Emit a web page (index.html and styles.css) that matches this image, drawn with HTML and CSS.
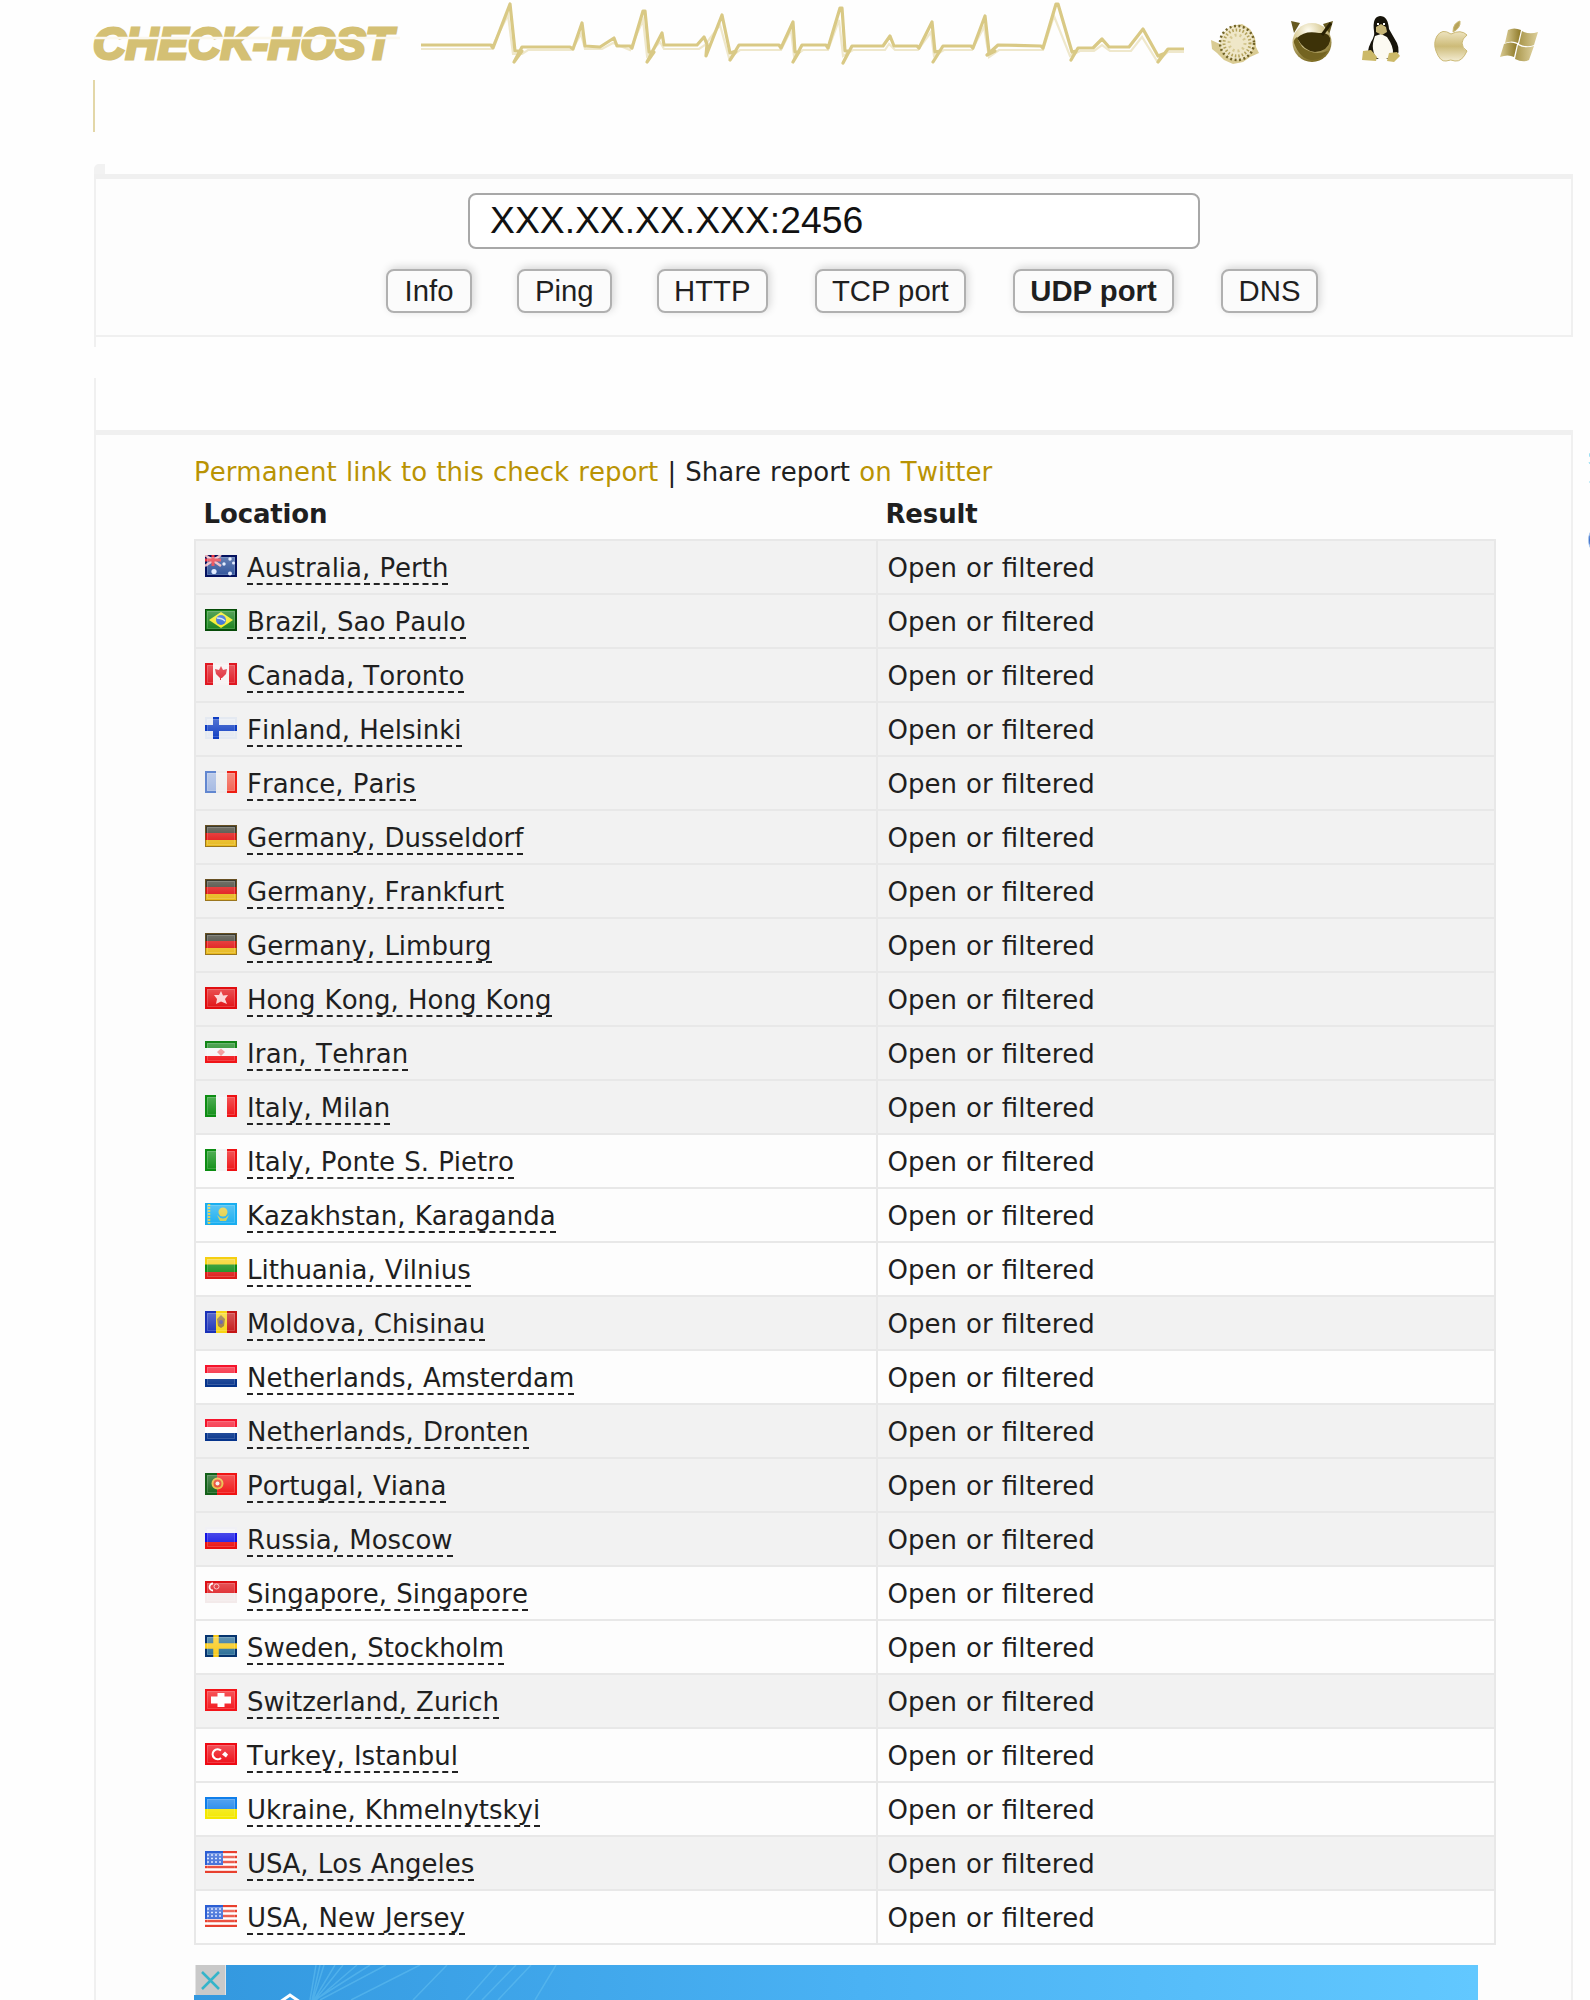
FILE: index.html
```html
<!DOCTYPE html>
<html lang="en">
<head>
<meta charset="utf-8">
<title>Check-Host</title>
<link rel="stylesheet" href="styles.css">
</head>
<body>
<svg class="defs" width="0" height="0" aria-hidden="true">
  <defs>
    <linearGradient id="shine" x1="0" y1="0" x2="0" y2="1"><stop offset="0" stop-color="#fff" stop-opacity=".28"/><stop offset="1" stop-color="#fff" stop-opacity=".04"/></linearGradient>
    <linearGradient id="gold" x1="0" y1="0" x2="0" y2="1"><stop offset="0" stop-color="#eee4c0"/><stop offset=".5" stop-color="#cdbb78"/><stop offset="1" stop-color="#f3ecd2"/></linearGradient>
    <linearGradient id="pane" x1="0" y1="0" x2="1" y2="0"><stop offset="0" stop-color="#d9cb93"/><stop offset="1" stop-color="#8d7826"/></linearGradient>
    <linearGradient id="pane2" x1="0" y1="0" x2="1" y2="0"><stop offset="0" stop-color="#a8954a"/><stop offset="1" stop-color="#ddd09c"/></linearGradient>
    <radialGradient id="orb" cx=".4" cy=".2" r=".85"><stop offset="0" stop-color="#fffdf2"/><stop offset=".45" stop-color="#d9cc98"/><stop offset="1" stop-color="#6f5d12"/></radialGradient>
  </defs>
  <symbol id="gloss" viewBox="0 0 32 22"><rect x="2" y="2" width="28" height="18" fill="url(#shine)"/><rect x="2.5" y="2.5" width="27" height="17" fill="none" stroke="#fff" stroke-opacity=".16"/></symbol>
  <symbol id="au" viewBox="0 0 32 22"><rect width="32" height="22" fill="#04125f"/><rect x="2" y="2" width="28" height="18" fill="#2b4f98"/><path d="M0 0l16 11M16 0L0 11" stroke="#e9b3bd" stroke-width="2.5"/><path d="M8 0v11M0 5h16" stroke="#e8333f" stroke-width="3"/><g fill="#dfeaff"><circle cx="9" cy="16.500" r="2.600"/><circle cx="19" cy="9" r="1.700"/><circle cx="25" cy="4" r="1.700"/><circle cx="28.500" cy="8" r="1.500"/><circle cx="25" cy="18.500" r="2"/></g></symbol>
  <symbol id="br" viewBox="0 0 32 22"><rect width="32" height="22" fill="#064b08"/><rect x="1" y="1" width="29" height="19" fill="#158018"/><path d="M16 3l12 8-12 8L4 11z" fill="#f5ec1d"/><circle cx="16" cy="11" r="5" fill="#2f68d4"/><path d="M12 9q5 0 8 3" stroke="#cfe0f5" stroke-width="1.300" fill="none"/></symbol>
  <symbol id="ca" viewBox="0 0 32 22"><rect width="32" height="22" fill="#e01822"/><rect x="8" width="16" height="22" fill="#f7f3f3"/><path d="M16 3l2 4 4-1-1 5-4 4h-1v2h-1v-2l-4-4-1-5 4 1z" fill="#df2230"/></symbol>
  <symbol id="fi" viewBox="0 0 32 22"><rect width="32" height="22" fill="#e4e9f1"/><path d="M11 0v22M0 11h32" stroke="#0d3cc2" stroke-width="6"/></symbol>
  <symbol id="fr" viewBox="0 0 32 22"><rect width="32" height="22" fill="#ececec"/><path d="M0 0h11v22H0z" fill="#6287d0"/><path d="M2 2h9v18H2z" fill="#a3b8e2"/><path d="M22 0h10v22H22z" fill="#ee1d12"/><path d="M22 2h8v18h-8z" fill="#f2604f"/></symbol>
  <symbol id="de" viewBox="0 0 32 22"><rect width="32" height="22" fill="#3a3a2e"/><path d="M0 8h32v7H0z" fill="#e01010"/><path d="M0 15h32v7H0z" fill="#e8b91c"/><rect x=".5" y=".5" width="31" height="21" fill="none" stroke="#7a5a20" stroke-opacity=".7"/></symbol>
  <symbol id="hk" viewBox="0 0 32 22"><rect width="32" height="22" fill="#e10d10"/><path d="M16 4l2 4.500 5-.5-3 4 2 5-6-2.500-5 2.500 1-5-3-4h5z" fill="#fbd0d0"/></symbol>
  <symbol id="ir" viewBox="0 0 32 22"><rect width="32" height="22" fill="#f5f5f5"/><path d="M0 0h32v7H0z" fill="#118516"/><path d="M0 15h32v7H0z" fill="#f01418"/><path d="M16 7.500l4 3.500-4 4-4-4z" fill="#ef9090"/></symbol>
  <symbol id="it" viewBox="0 0 32 22"><rect width="32" height="22" fill="#f3f3f3"/><path d="M0 0h11v22H0z" fill="#0c8d12"/><path d="M22 0h10v22H22z" fill="#ee1114"/></symbol>
  <symbol id="kz" viewBox="0 0 32 22"><rect width="32" height="22" fill="#19aef0"/><circle cx="18" cy="9" r="4.500" fill="#e3cd3c"/><path d="M12 12q6 7 12 0l-3 6h-6z" fill="#c9cd55"/><path d="M4 1v20" stroke="#d9c93e" stroke-width="2.500" stroke-dasharray="2 1"/></symbol>
  <symbol id="lt" viewBox="0 0 32 22"><rect width="32" height="22" fill="#f5cf11"/><path d="M0 7.500h32V15H0z" fill="#0c8b12"/><path d="M0 15h32v7H0z" fill="#dc1c18"/></symbol>
  <symbol id="md" viewBox="0 0 32 22"><rect width="32" height="22" fill="#f7d412"/><path d="M0 0h11v22H0z" fill="#1a31b8"/><path d="M22 0h10v22H22z" fill="#c41616"/><path d="M16 4l4 4-1 7-3 2-3-2-1-7z" fill="#94723d"/><circle cx="16" cy="11" r="2" fill="#5a4fa0"/></symbol>
  <symbol id="nl" viewBox="0 0 32 22"><rect width="32" height="22" fill="#fff"/><path d="M0 0h32v8H0z" fill="#f5142c"/><path d="M0 14h32v8H0z" fill="#06348c"/></symbol>
  <symbol id="pt" viewBox="0 0 32 22"><rect width="32" height="22" fill="#f01414"/><path d="M0 0h12v22H0z" fill="#126018"/><circle cx="12.500" cy="10.500" r="5" fill="#e83a20" stroke="#e8b838" stroke-width="2"/><circle cx="12.500" cy="10.500" r="2" fill="#f3eeee"/></symbol>
  <symbol id="ru" viewBox="0 0 32 22"><rect width="32" height="22" fill="#f0f0f5"/><path d="M0 6h32v9H0z" fill="#1212e4"/><path d="M0 15h32v7H0z" fill="#ea1010"/></symbol>
  <symbol id="sg" viewBox="0 0 32 22"><rect width="32" height="22" fill="#f3eaea"/><path d="M0 0h32v12H0z" fill="#dc1015"/><path d="M8 2.500a3.500 3.500 0 1 0 0 7" stroke="#fff" stroke-width="1.800" fill="none"/><circle cx="11.500" cy="5.500" r="2.500" stroke="#f7b6b6" fill="none"/></symbol>
  <symbol id="se" viewBox="0 0 32 22"><rect width="32" height="22" fill="#06346f"/><rect x="2" y="2" width="28" height="18" fill="#256b95"/><path d="M11 0v22M0 11h32" stroke="#f8c916" stroke-width="5.500"/></symbol>
  <symbol id="ch" viewBox="0 0 32 22"><rect width="32" height="22" fill="#f3141a"/><path d="M16 4v14M6 11h20" stroke="#fff" stroke-width="7"/></symbol>
  <symbol id="tr" viewBox="0 0 32 22"><rect width="32" height="22" fill="#ee0a14"/><path d="M16 7.500a5 5 0 1 0 0 7.500" stroke="#fff" stroke-width="2.200" fill="none"/><path d="M17 11.500l3-3 3 3-2 3z" fill="#fff"/></symbol>
  <symbol id="ua" viewBox="0 0 32 22"><rect width="32" height="22" fill="#0f7eea"/><path d="M0 12h32v10H0z" fill="#f3e800"/></symbol>
  <symbol id="us" viewBox="0 0 32 22"><rect width="32" height="22" fill="#fff"/><path d="M0 1h32M0 6h32M0 11h32M0 16h32M0 21h32" stroke="#e8402e" stroke-width="2.400"/><rect width="18" height="14" fill="#2c5fd4"/><path d="M2 4h15M2 7.500h15M2 11h15" stroke="#d3e1ff" stroke-width="1.500" stroke-dasharray="2 2"/></symbol>
</svg>

<div class="page">
  <header class="header">
    <svg width="1479" height="80" viewBox="94 0 1479 80">
      <text class="logo" x="93" y="59" textLength="300" lengthAdjust="spacingAndGlyphs">CHECK-HOST</text>
      <path class="logo-slit" d="M94 38h306"/>
      <path class="pulse-shade" d="M421 49H491L508 15L513 54L522 54 528 50H572L581 34L585 49H602L613 43L630 50L643 20L647 56L660 42L664 49H699L705 45L720 25L729 58L740 50H781L791 30L794 56L803 50H828L839 20L843 56L853 50H885L889 44L895 50H918L931 32L934 56L944 50H972L984 27L989 57L999 50H1043L1054 16L1070 56L1080 51H1094L1102 45L1110 51H1131L1142 37L1157 61L1168 52H1184"/>
      <path class="pulse" d="M421 45H491L493 48L510 4L515 51L522 51L514 62L522 47H570L573 49L582 23L585 46L600 47L614 38L617 46H630L632 48L643 11H645L649 52L654 52L647 62L662 33L664 45H697L704 37L707 44L706 56L722 15L730 53L736 51L730 60L739 45H779L781 48L793 22L795 52L799 52L793 62L802 45H826L828 48L840 8H842L845 51L849 51L843 63L852 46H883L890 36L894 46H917L919 48L932 22L935 52L940 51L933 62L943 46H971L973 48L985 16L989 52L995 51L987 55L998 45L1041 46L1043 48L1056 4H1058L1072 52L1076 51L1071 60L1078 48H1093L1102 39L1109 47H1129L1143 29L1158 56L1163 54L1158 62L1168 49H1184"/>

      <g>
        <path d="M1211 40l9 4 4-10 8-8 10-2 8 5 5 9 1 9 3 6-9 4-7 5-10 2-9-4-7-7-5-4z" fill="#d9cb93"/>
        <circle cx="1237" cy="43" r="17" fill="#efe7c8" stroke="#716326" stroke-width="2.500" stroke-dasharray="2 2.500"/>
        <circle cx="1237" cy="43" r="13" fill="none" stroke="#b4a35d" stroke-width="3" stroke-dasharray="1.500 2"/>
        <circle cx="1237" cy="43" r="8" fill="none" stroke="#d5c891" stroke-width="3" stroke-dasharray="2 3"/>
      </g>
      <g>
        <path d="M1291 21l9 2-6 10z M1333 21l-10 3 6 11z" fill="#665920"/>
        <circle cx="1312" cy="42.500" r="19.500" fill="url(#orb)"/>
        <path d="M1294 43q-1-3 3-6 4 12 12 14 8 4 19 0-7 10-17 9-11-1-17-17z" fill="#746421"/>
        <path d="M1297 38q8-8 22-5 12-1 11 8-2 10-15 11-11-1-18-14z" fill="#3d3208"/>
        <path d="M1331 23l-9 12" stroke="#282003" stroke-width="3"/>
      </g>
      <g>
        <path d="M1374 31q-2-14 6-15 8 0 9 13l8 14q4 9-2 16h-26q-3-7 2-17 4-6 3-11z" fill="#17140a"/>
        <path d="M1375 36l6-2 6 3q7 10 6 17-5 7-14 5-5-2-6-10-1-5 2-13z" fill="#fcfaf2"/>
        <path d="M1376 27l5-3 5 3 1 5-5 3-6-3z" fill="#c7b676"/>
        <path d="M1377 24h2m4 0h2" stroke="#fff" stroke-width="2"/>
        <path d="M1363 51l8-1 6 7-1 4-14-1zM1387 61l2-8 8-1 3 4-6 6z" fill="#ccb968"/>
      </g>
      <g fill="url(#gold)" stroke="#cbb976" stroke-width="1">
        <path d="M1453 32q0-9 7-11 1 7-7 11z" fill="#b8a459"/>
        <path d="M1451 34q-9-6-14 2-4 7-1 15 4 11 10 10 5-2 9 0 7 1 12-10-5-3-5-8 0-4 5-8-6-6-16-1z"/>
      </g>
      <g>
        <path d="M1508 30q6-3 13 0l-3 13q-6-3-13 0z" fill="url(#pane)"/><path d="M1522 31q7 4 16 1l-4 13q-7 3-15-1z" fill="url(#pane2)"/>
        <path d="M1504 44q6-3 13 0l-3 13q-6-3-14 0z" fill="url(#pane)"/><path d="M1518 45q7 4 16 1l-5 14q-6 3-14-1z" fill="url(#pane2)"/>
      </g>
    </svg>
  </header>
  <div class="gold-stub"></div>
  <div class="notch"></div>

  <section class="search">
    <div class="host">XXX.XX.XX.XXX:2456</div>
    <nav class="buttons">
      <div class="btn w-info">Info</div>
      <div class="btn w-ping">Ping</div>
      <div class="btn w-http">HTTP</div>
      <div class="btn w-tcp">TCP port</div>
      <div class="btn w-udp active">UDP port</div>
      <div class="btn w-dns">DNS</div>
    </nav>
  </section>
  <div class="stub-end"></div>
  <div class="stub-start"></div>

  <main class="report">
    <p class="links"><a>Permanent link to this check report</a> | Share report <a>on Twitter</a></p>
    <div class="head"><span>Location</span><span>Result</span></div>
    <div class="table">
      <div class="row dim"><div class="loc"><svg class="flag"><use href="#au"/><use href="#gloss"/></svg><div><span class="name">Australia, Perth</span></div></div><div class="res">Open or filtered</div></div>
      <div class="row dim"><div class="loc"><svg class="flag"><use href="#br"/><use href="#gloss"/></svg><div><span class="name">Brazil, Sao Paulo</span></div></div><div class="res">Open or filtered</div></div>
      <div class="row dim"><div class="loc"><svg class="flag"><use href="#ca"/><use href="#gloss"/></svg><div><span class="name">Canada, Toronto</span></div></div><div class="res">Open or filtered</div></div>
      <div class="row dim"><div class="loc"><svg class="flag"><use href="#fi"/><use href="#gloss"/></svg><div><span class="name">Finland, Helsinki</span></div></div><div class="res">Open or filtered</div></div>
      <div class="row dim"><div class="loc"><svg class="flag"><use href="#fr"/><use href="#gloss"/></svg><div><span class="name">France, Paris</span></div></div><div class="res">Open or filtered</div></div>
      <div class="row dim"><div class="loc"><svg class="flag"><use href="#de"/><use href="#gloss"/></svg><div><span class="name">Germany, Dusseldorf</span></div></div><div class="res">Open or filtered</div></div>
      <div class="row dim"><div class="loc"><svg class="flag"><use href="#de"/><use href="#gloss"/></svg><div><span class="name">Germany, Frankfurt</span></div></div><div class="res">Open or filtered</div></div>
      <div class="row dim"><div class="loc"><svg class="flag"><use href="#de"/><use href="#gloss"/></svg><div><span class="name">Germany, Limburg</span></div></div><div class="res">Open or filtered</div></div>
      <div class="row dim"><div class="loc"><svg class="flag"><use href="#hk"/><use href="#gloss"/></svg><div><span class="name">Hong Kong, Hong Kong</span></div></div><div class="res">Open or filtered</div></div>
      <div class="row dim"><div class="loc"><svg class="flag"><use href="#ir"/><use href="#gloss"/></svg><div><span class="name wide-i">Iran, Tehran</span></div></div><div class="res">Open or filtered</div></div>
      <div class="row dim"><div class="loc"><svg class="flag"><use href="#it"/><use href="#gloss"/></svg><div><span class="name">Italy, Milan</span></div></div><div class="res">Open or filtered</div></div>
      <div class="row"><div class="loc"><svg class="flag"><use href="#it"/><use href="#gloss"/></svg><div><span class="name">Italy, Ponte S. Pietro</span></div></div><div class="res">Open or filtered</div></div>
      <div class="row"><div class="loc"><svg class="flag"><use href="#kz"/><use href="#gloss"/></svg><div><span class="name">Kazakhstan, Karaganda</span></div></div><div class="res">Open or filtered</div></div>
      <div class="row"><div class="loc"><svg class="flag"><use href="#lt"/><use href="#gloss"/></svg><div><span class="name">Lithuania, Vilnius</span></div></div><div class="res">Open or filtered</div></div>
      <div class="row dim"><div class="loc"><svg class="flag"><use href="#md"/><use href="#gloss"/></svg><div><span class="name">Moldova, Chisinau</span></div></div><div class="res">Open or filtered</div></div>
      <div class="row"><div class="loc"><svg class="flag"><use href="#nl"/><use href="#gloss"/></svg><div><span class="name">Netherlands, Amsterdam</span></div></div><div class="res">Open or filtered</div></div>
      <div class="row dim"><div class="loc"><svg class="flag"><use href="#nl"/><use href="#gloss"/></svg><div><span class="name">Netherlands, Dronten</span></div></div><div class="res">Open or filtered</div></div>
      <div class="row dim"><div class="loc"><svg class="flag"><use href="#pt"/><use href="#gloss"/></svg><div><span class="name">Portugal, Viana</span></div></div><div class="res">Open or filtered</div></div>
      <div class="row dim"><div class="loc"><svg class="flag"><use href="#ru"/><use href="#gloss"/></svg><div><span class="name">Russia, Moscow</span></div></div><div class="res">Open or filtered</div></div>
      <div class="row"><div class="loc"><svg class="flag"><use href="#sg"/><use href="#gloss"/></svg><div><span class="name">Singapore, Singapore</span></div></div><div class="res">Open or filtered</div></div>
      <div class="row"><div class="loc"><svg class="flag"><use href="#se"/><use href="#gloss"/></svg><div><span class="name">Sweden, Stockholm</span></div></div><div class="res">Open or filtered</div></div>
      <div class="row dim"><div class="loc"><svg class="flag"><use href="#ch"/><use href="#gloss"/></svg><div><span class="name">Switzerland, Zurich</span></div></div><div class="res">Open or filtered</div></div>
      <div class="row"><div class="loc"><svg class="flag"><use href="#tr"/><use href="#gloss"/></svg><div><span class="name">Turkey, Istanbul</span></div></div><div class="res">Open or filtered</div></div>
      <div class="row"><div class="loc"><svg class="flag"><use href="#ua"/><use href="#gloss"/></svg><div><span class="name">Ukraine, Khmelnytskyi</span></div></div><div class="res">Open or filtered</div></div>
      <div class="row dim"><div class="loc"><svg class="flag"><use href="#us"/><use href="#gloss"/></svg><div><span class="name">USA, Los Angeles</span></div></div><div class="res">Open or filtered</div></div>
      <div class="row"><div class="loc"><svg class="flag"><use href="#us"/><use href="#gloss"/></svg><div><span class="name wide-j">USA, New Jersey</span></div></div><div class="res">Open or filtered</div></div>
    </div>
    <div class="banner">
      <svg width="1284" height="35" viewBox="194 1965 1284 35">
        <path d="M310 2000L316 1965M312 2000L320 1965M313 2000L324 1965M314 2000L335 1965M315 2000L343 1965M316 2000L357 1965M318 1998L370 1965M320 2000L386 1965M351 2000L420 1965M413 2000L447 1965M466 2000L497 1965M482 2000L516 1965M498 2000L531 1965M535 2000L556 1965" stroke="#62bff0" stroke-width="1.500" stroke-opacity=".55" fill="none"/>
        <path d="M280 2002l10-7 10 7" stroke="#fff" stroke-width="3" fill="none"/>
        <path d="M194 1965h32v30h-32z" fill="#fdfdfd"/>
        <path d="M195.500 1965h30v30h-30z" fill="#c9c9c9"/>
        <path d="M202 1972l17 17M219 1972l-17 17" stroke="#35b4ca" stroke-width="2.500"/>
      </svg>
    </div>
  </main>
</div>
<svg class="share" width="4" height="120" viewBox="1586 445 4 120">
  <path d="M1590 453q-1 2 0 4M1589 462l1 2M1589 482h1" stroke="#8fdcf2" stroke-width="1" fill="none"/>
  <circle cx="1606" cy="540" r="17.500" fill="#3e70ca" stroke="#a9c7ee"/>
</svg>
</body>
</html>
```
FILE: styles.css
```css
* { box-sizing: border-box; }

body {
  margin: 0;
  width: 1590px;
  height: 2000px;
  overflow: hidden;
  position: relative;
  background: #fefefe;
  color: #1f1f1f;
  font: 26px "DejaVu Sans", sans-serif;
  font-kerning: none;
}

.defs { position: absolute; }
.page { width: 1479px; margin-left: 94px; }

.header { height: 80px; }
.header svg { display: block; overflow: visible; }
.logo {
  font: italic bold 44.5px "Liberation Sans", sans-serif;
  fill: #d4c074;
  stroke: #d4c074;
  stroke-width: 3;
}
.logo-slit { stroke: #fbf8ee; stroke-width: 2.5; }
.pulse { fill: none; stroke: #d9c985; stroke-width: 3.2; stroke-linejoin: round; }
.pulse-shade { fill: none; stroke: #efe8cc; stroke-width: 2.2; }

.gold-stub { height: 52px; margin-left: -1px; border-left: 2px solid #e3d7a8; }
.notch {
  width: 11px;
  height: 10px;
  margin-top: 32px;
  border-radius: 5px 0 0;
  background: #f2f2f2;
}

.search {
  height: 163px;
  padding-top: 14px;
  border: solid #f0f0f0;
  border-width: 5px 2px 2px 2px;
  background: #fdfdfd;
}
.host {
  width: 732px;
  height: 56px;
  margin-left: 372px;
  padding-left: 20px;
  border: 2px solid #a8a8a8;
  border-radius: 8px;
  background: #fff;
  color: #111;
  font: 37.3px/51px "Liberation Sans", sans-serif;
}
.buttons {
  display: flex;
  gap: 44.5px;
  margin: 20px 0 0 290px;
}
.btn {
  flex: none;
  height: 44px;
  border: 2px solid #b0b0b0;
  border-radius: 8px;
  background: #fbfbfb;
  box-shadow: 2px -2px 8px rgba(0, 0, 0, .16);
  text-align: center;
  white-space: nowrap;
  font: 29.3px/40px "Liberation Sans", sans-serif;
}
.active { font-weight: bold; }
.w-info { width: 86px; }
.w-ping { width: 95.5px; }
.w-http { width: 111.5px; }
.w-tcp { width: 151.5px; margin-left: 2px; }
.w-udp { width: 161px; margin-left: 2.5px; }
.w-dns { width: 97px; margin-left: 2.5px; }

.stub-end { height: 10px; border-left: 2px solid #f0f0f0; }
.stub-start { height: 52px; margin-top: 31px; border-left: 2px solid #f0f0f0; }

.report {
  height: 1570px;
  padding: 16px 0 0 98px;
  border: solid #f0f0f0;
  border-width: 5px 2px 0 2px;
  background: #fdfdfd;
}
.links { margin: 0; line-height: 42px; word-spacing: .9px; }
.links a { color: #b99303; }
.head {
  display: grid;
  grid-template-columns: 682px 1fr;
  padding-left: 9.5px;
  line-height: 42px;
  font-weight: bold;
  letter-spacing: -.15px;
}

.table {
  width: 1302px;
  margin-top: 4px;
  border: solid #e8e8e8;
  border-width: 2px 2px 0;
}
.row {
  display: grid;
  grid-template-columns: 682px 1fr;
  height: 54px;
  border-bottom: 2px solid #e8e8e8;
  line-height: 51px;
  word-spacing: .9px;
}
.dim { background: #f2f2f2; }
.loc { display: flex; gap: 10px; padding: 2px 0 0 9px; border-right: 2px solid #e8e8e8; }
.flag { width: 32px; height: 22px; margin-top: 12px; }
.name { padding-bottom: 0; border-bottom: 2px dashed #222; }
.wide-i, .wide-j { letter-spacing: .15px; }
.res { padding: 2px 0 0 9.5px; }

.banner {
  width: 1284px;
  height: 35px;
  margin-top: 20px;
  background: linear-gradient(90deg, #3398df, #4ab2f4 52%, #62c8ff);
}
.banner svg { display: block; }
.share { position: absolute; left: 1586px; top: 445px; }
```
